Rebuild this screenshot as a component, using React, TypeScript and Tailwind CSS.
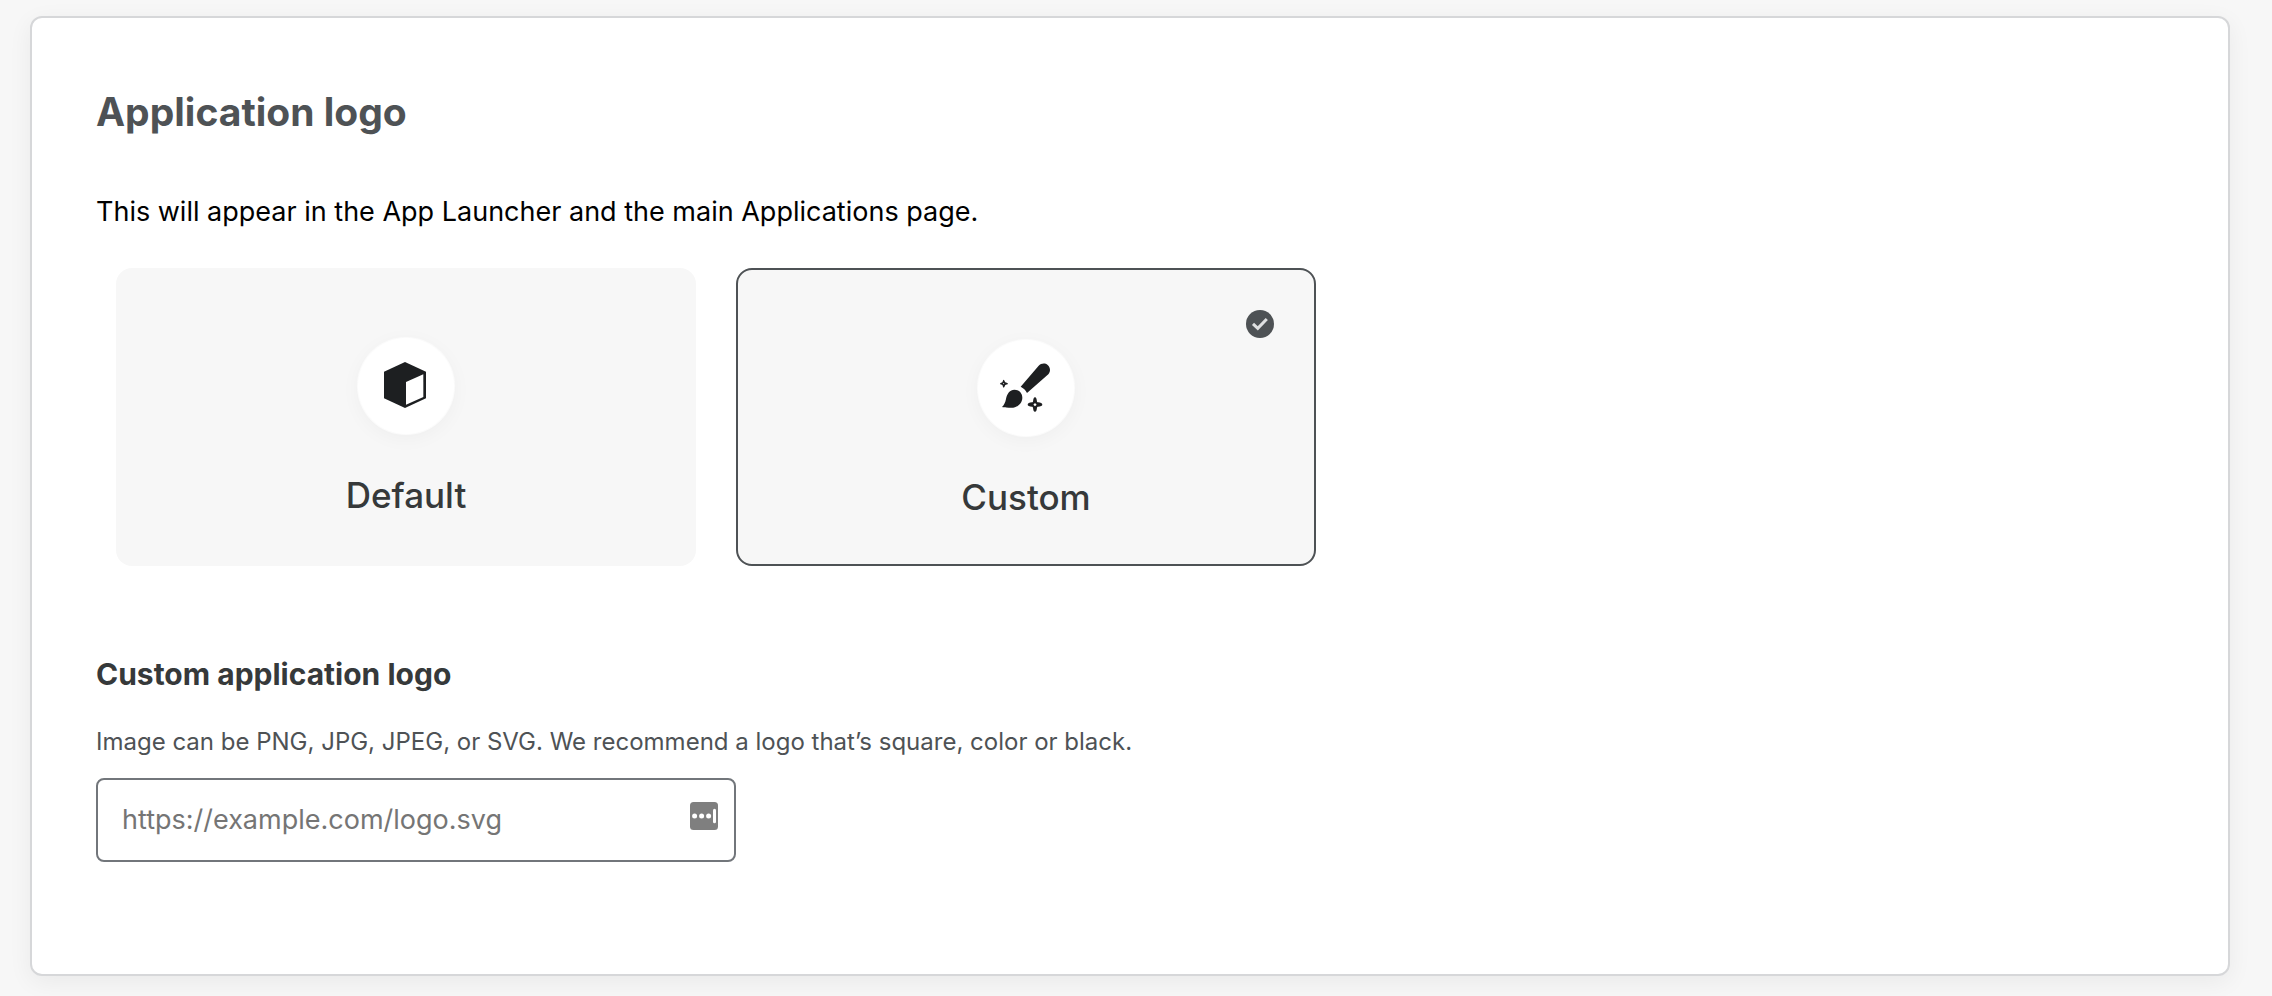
import { useState, type ReactNode } from "react";

function CubeIcon() {
  return (
    <svg viewBox="54 54 288 288" className="size-24" aria-hidden="true">
      <path d="M195 126 258 155V235L195 264 132 235V155Z" fill="#1d1f21" />
      <path d="M198 186 250 163V231L198 254Z" fill="#fff" />
    </svg>
  );
}

function BrushIcon() {
  return (
    <svg viewBox="54 61 288 288" className="size-24" aria-hidden="true" fill="#1d1f21">
      <path d="M182 201 236 138C243 131 255 129 263 136C272 144 272 156 265 164L201 220C197 211 190 205 182 201Z" />
      <path d="M126 262C132 256 136 249 138 238C141 221 150 210 163 210C177 210 187 221 187 234C187 250 173 264 154 264C144 264 133 264 126 262Z" />
      <path
        fillRule="evenodd"
        d="M131 180C133 180 135 188 136 188C137 189 144 190 144 192C144 194 137 195 136 196C135 197 133 204 131 204C129 204 128 197 127 196C126 195 120 194 120 192C120 190 126 189 127 188C128 187 129 180 131 180ZM131 190 129 192 131 194 133 192Z"
      />
      <path
        fillRule="evenodd"
        d="M225 233C229 233 230 238 231 246C232 247 232 248 234 248C242 249 247 251 247 255C247 258 242 260 234 261C232 261 232 262 231 264C230 272 229 276 225 276C221 276 220 272 219 264C218 262 218 261 216 261C208 260 203 258 203 255C203 251 208 249 216 248C218 248 218 247 219 246C220 238 221 233 225 233ZM225 250 220 255 225 260 230 255Z"
      />
    </svg>
  );
}

function CheckBadge() {
  return (
    <svg viewBox="0 0 28 28" className="absolute top-10 right-10 size-7" aria-hidden="true">
      <circle cx="14" cy="14" r="14" fill="#4e5255" />
      <path d="M7 13.8 11.8 18.4 20.8 9" fill="none" stroke="#dfe0e1" strokeWidth="3" />
    </svg>
  );
}

function PasswordManagerIcon() {
  return (
    <svg viewBox="0 0 28 28" className="size-7" aria-hidden="true">
      <rect width="28" height="28" rx="3.5" fill="#7f7f7f" />
      <g fill="#fff">
        <circle cx="4.6" cy="14" r="2.5" />
        <circle cx="11.6" cy="14" r="2.5" />
        <circle cx="18.6" cy="14" r="2.5" />
        <rect x="23" y="6.8" width="3" height="14.4" rx="1.5" />
      </g>
    </svg>
  );
}

type TileProps = {
  label: string;
  icon: ReactNode;
  checked: boolean;
  onSelect: () => void;
};

function LogoTile({ label, icon, checked, onSelect }: TileProps) {
  return (
    <label
      className={
        "relative flex cursor-pointer flex-col items-center gap-[34px] rounded-2xl bg-[#f7f7f7] pt-[70px] pb-10 " +
        (checked ? "border-2 border-[#4e5255]" : "")
      }
    >
      <input type="radio" name="logo" className="sr-only" checked={checked} onChange={onSelect} />
      {checked && <CheckBadge />}
      <span className="rounded-full bg-white shadow-[0_0_0_1px_#fbfbfb,0_4px_20px_rgba(0,0,0,0.04)]">{icon}</span>
      <span className="text-[35px] leading-[54px] font-medium text-[#36393a]">{label}</span>
    </label>
  );
}

export default function App() {
  const [choice, setChoice] = useState("custom");
  const [url, setUrl] = useState("");

  return (
    <main className="min-h-screen bg-[#f7f7f7] pt-4 pr-[42px] pb-5 pl-[30px] font-[Inter,sans-serif]">
      <section className="rounded-xl border-2 border-[#d6d7d9] bg-white px-16 pt-[70px] pb-28 shadow-[0_6px_24px_rgba(0,0,0,0.06)]">
        <h2 className="text-[39px] leading-[48px] font-bold text-[#4e5255]">Application logo</h2>
        <p className="mt-14 text-[27px] leading-10 text-black">
          This will appear in the App Launcher and the main Applications page.
        </p>
        <div className="mx-5 mt-9 grid max-w-[1200px] grid-cols-2 gap-10">
          <LogoTile label="Default" icon={<CubeIcon />} checked={choice === "default"} onSelect={() => setChoice("default")} />
          <LogoTile label="Custom" icon={<BrushIcon />} checked={choice === "custom"} onSelect={() => setChoice("custom")} />
        </div>
        <label htmlFor="logo-url" className="mt-[88px] block text-[30px] leading-10 font-bold text-[#36393a]">
          Custom application logo
        </label>
        <p id="logo-help" className="mt-[30px] text-[24px] leading-9 text-[#4e5255]">
          Image can be PNG, JPG, JPEG, or SVG. We recommend a logo that’s square, color or black.
        </p>
        <div className="mt-[18px] flex h-[84px] max-w-[640px] items-center rounded-lg border-2 border-[#72767b] bg-white pr-4 pl-6">
          <input
            id="logo-url"
            type="url"
            aria-describedby="logo-help"
            placeholder="https://example.com/logo.svg"
            value={url}
            onChange={(e) => setUrl(e.target.value)}
            className="min-w-0 flex-1 bg-transparent text-[27px] leading-10 text-black outline-none placeholder:text-[#757575]"
          />
          <button type="button" aria-label="Fill from password manager" className="mb-2">
            <PasswordManagerIcon />
          </button>
        </div>
      </section>
    </main>
  );
}
